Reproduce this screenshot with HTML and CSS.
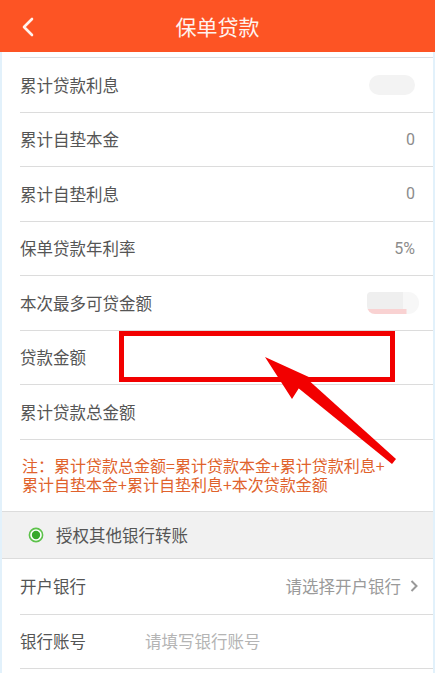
FILE: index.html
```html
<!DOCTYPE html>
<html lang="zh-CN">
<head>
    <meta charset="UTF-8">
    <title>保单贷款</title>
    <link rel="stylesheet" href="styles.css">
</head>
<body>

<article id="loan">
    <header class="topbar">
        <button class="back">
            <svg width="14" height="22" viewBox="0 0 14 22"><path d="M11 3 L3 11 L11 19" fill="none" stroke="#fff3ee" stroke-width="2.6" stroke-linecap="round" stroke-linejoin="round"/></svg>
        </button>
        <h1>保单贷款</h1>
    </header>

    <section class="content">
        <div class="stub"></div>
        <ul class="rows">
            <li><span class="label">累计贷款利息</span><span class="blur"></span></li>
            <li><span class="label">累计自垫本金</span><span class="value">0</span></li>
            <li><span class="label">累计自垫利息</span><span class="value">0</span></li>
            <li><span class="label">保单贷款年利率</span><span class="value">5%</span></li>
            <li><span class="label">本次最多可贷金额</span><span class="blur pink"></span></li>
            <li><span class="label">贷款金额</span></li>
            <li><span class="label">累计贷款总金额</span></li>
        </ul>
        <p class="note">注：累计贷款总金额=累计贷款本金+累计贷款利息+<br>累计自垫本金+累计自垫利息+本次贷款金额</p>

        <div class="auth">
            <svg width="16" height="16" viewBox="0 0 16 16"><circle cx="8" cy="8" r="6.6" fill="#fff" stroke="#5cc24a" stroke-width="1.6"/><circle cx="8" cy="8" r="4.2" fill="#37a82c"/></svg>
            <span>授权其他银行转账</span>
        </div>

        <ul class="rows bank">
            <li>
                <span class="label">开户银行</span>
                <span class="select">请选择开户银行
                    <svg width="10" height="14" viewBox="0 0 10 14"><path d="M2.5 2 L7.5 7 L2.5 12" fill="none" stroke="#999" stroke-width="2"/></svg>
                </span>
            </li>
            <li><span class="label wide">银行账号</span><span class="placeholder">请填写银行账号</span></li>
        </ul>
    </section>

    <!-- annotation drawn over the screenshot -->
    <div class="mark-box"></div>
    <svg class="mark-arrow" width="435" height="673" viewBox="0 0 435 673">
        <polygon points="265,357 292,399 299,388 311,378" fill="#f20000"/>
        <polygon points="297,387 305,377 396,459 392,464" fill="#f20000"/>
    </svg>
</article>

</body>
</html>
```

FILE: styles.css
```css
body {
    margin: 0;
    padding: 0;
    background-color: #ffffff;
}

#loan {
    position: relative;
    width: 435px;
    height: 673px;
    overflow: hidden;
    font-family: "Noto Sans CJK SC", "Noto Sans", sans-serif;
    color: #555555;
}

#loan ul {
    list-style: none;
    margin: 0;
    padding: 0;
}

#loan .topbar {
    display: flex;
    align-items: center;
    justify-content: center;
    position: relative;
    height: 52px;
    background-color: #fd5424;
}

#loan .topbar h1 {
    margin: 0;
    font-size: 21px;
    font-weight: normal;
    color: #fff3ee;
}

#loan .back {
    position: absolute;
    left: 21px;
    top: 16px;
    padding: 0;
    border: 0;
    background: none;
}

#loan .content {
    height: 621px;
    border-left: 2px solid #e2f1fb;
    border-right: 2px solid #e2f1fb;
    box-sizing: border-box;
}

#loan .stub {
    height: 6px;
    margin-left: 18px;
    border-bottom: 1px solid #dadde2;
    box-sizing: border-box;
}

#loan .rows li {
    display: flex;
    align-items: center;
    justify-content: space-between;
    height: 54.5px;
    margin-left: 18px;
    padding-right: 18px;
    border-bottom: 1px solid #dcdcdc;
    box-sizing: border-box;
    font-size: 16.5px;
}

#loan .value {
    color: #8c8c8c;
    font-family: "Roboto", "Noto Sans", sans-serif;
    font-size: 16px;
}

#loan .blur {
    width: 46px;
    height: 20px;
    border-radius: 10px;
    background-color: #f3f3f3;
}

#loan .blur.pink {
    width: 52px;
    height: 22px;
    margin-right: -4px;
    background:
        linear-gradient(to bottom, transparent 76%, #f9d2d2 76%) left / 76% 100% no-repeat,
        linear-gradient(to right, #efefef 70%, #f7f7f7 70%);
    border-radius: 4px 11px 11px 8px;
}

#loan .note {
    margin: 0;
    padding: 16px 0 17px 20px;
    font-size: 16px;
    line-height: 19px;
    color: #e0622c;
}

#loan .auth {
    display: flex;
    align-items: center;
    gap: 12px;
    height: 48px;
    padding-left: 26px;
    background-color: #f1f1f1;
    border-top: 1px solid #dcdcdc;
    border-bottom: 1px solid #dcdcdc;
    box-sizing: border-box;
    font-size: 16.5px;
}

#loan .bank li:first-child {
    height: 56px;
}

#loan .bank li {
    justify-content: flex-start;
}

#loan .bank .label {
    min-width: 125px;
}

#loan .select {
    display: flex;
    align-items: center;
    gap: 8px;
    margin-left: auto;
    margin-right: -4px;
    color: #9a9a9a;
}

#loan .placeholder {
    color: #b4b4b4;
}

#loan .mark-box {
    position: absolute;
    left: 119px;
    top: 331px;
    width: 276px;
    height: 51px;
    border: 5px solid #f20000;
    box-sizing: border-box;
}

#loan .mark-arrow {
    position: absolute;
    left: 0;
    top: 0;
    pointer-events: none;
}
```
